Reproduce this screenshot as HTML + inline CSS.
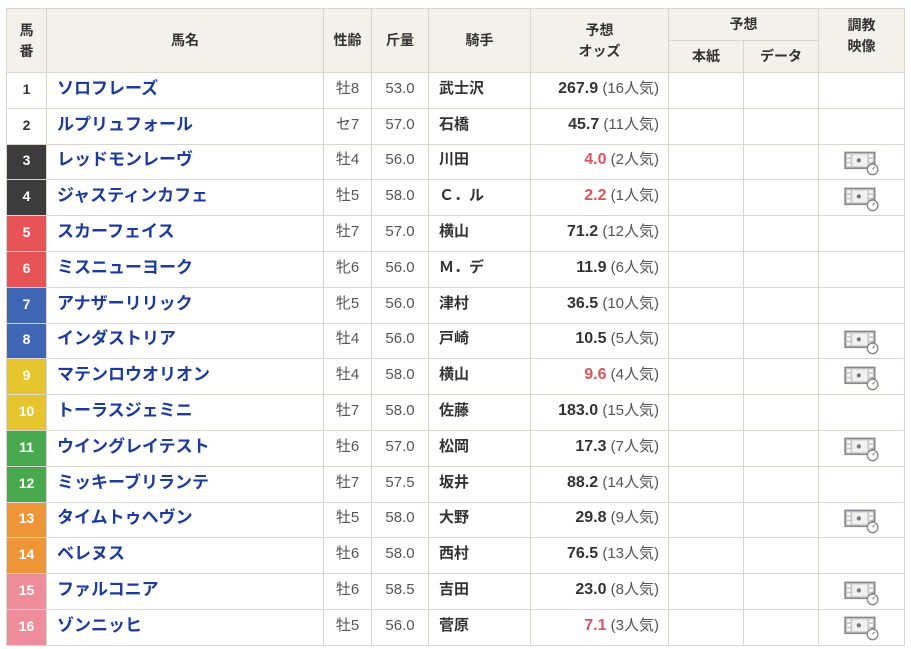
<!DOCTYPE html><html><head><meta charset="utf-8"><style>
body{margin:0;background:#fff;font-family:"Liberation Sans","Noto Sans CJK JP",sans-serif;}
table{position:absolute;left:6px;top:8px;border-collapse:collapse;table-layout:fixed;width:898px;}
td,th{border:1px solid #d9d6d0;padding:0;font-size:15px;color:#333;line-height:18px;vertical-align:middle;}
th{background:#f3f1ec;font-weight:bold;font-size:14px;line-height:21px;}
tbody tr{height:35.8px;}
tbody td{padding-bottom:3px;}
.n{text-align:center;font-weight:bold;font-size:14px;}
.nm{color:#1d3b9c;font-weight:bold;font-size:17px;padding-left:10px;}
.c{text-align:center;color:#555;}
.j{font-weight:bold;padding-left:10px;}
.o{text-align:right;padding-right:9px;color:#555;}
.o b{font-size:16px;color:#333;}
.o b.r{color:#d9555c;}
.ic{text-align:center;padding-bottom:0;}
</style></head><body>
<table>
<colgroup><col style="width:40px"><col style="width:277px"><col style="width:48px"><col style="width:57px"><col style="width:102px"><col style="width:138px"><col style="width:75px"><col style="width:75px"><col style="width:86px"></colgroup>
<thead>
<tr style="height:32px"><th rowspan="2">馬<br>番</th><th rowspan="2">馬名</th><th rowspan="2">性齢</th><th rowspan="2">斤量</th><th rowspan="2">騎手</th><th rowspan="2">予想<br>オッズ</th><th colspan="2">予想</th><th rowspan="2" style="vertical-align:top;padding-top:6px">調教<br>映像</th></tr>
<tr style="height:32px"><th>本紙</th><th>データ</th></tr>
</thead>
<tbody id="b"></tbody></table>
<script>
var d=[["1","ソロフレーズ","牡8","53.0","武士沢","267.9","16",0,0,"#fff","#333"],
["2","ルプリュフォール","セ7","57.0","石橋","45.7","11",0,0,"#fff","#333"],
["3","レッドモンレーヴ","牡4","56.0","川田","4.0","2",1,1,"#3c3c3c","#fff"],
["4","ジャスティンカフェ","牡5","58.0","Ｃ．ル","2.2","1",1,1,"#3c3c3c","#fff"],
["5","スカーフェイス","牡7","57.0","横山","71.2","12",0,0,"#e65457","#fff"],
["6","ミスニューヨーク","牝6","56.0","Ｍ．デ","11.9","6",0,0,"#e65457","#fff"],
["7","アナザーリリック","牝5","56.0","津村","36.5","10",0,0,"#3e66b4","#fff"],
["8","インダストリア","牡4","56.0","戸崎","10.5","5",0,1,"#3e66b4","#fff"],
["9","マテンロウオリオン","牡4","58.0","横山","9.6","4",1,1,"#e5c42d","#fff"],
["10","トーラスジェミニ","牡7","58.0","佐藤","183.0","15",0,0,"#e5c42d","#fff"],
["11","ウイングレイテスト","牡6","57.0","松岡","17.3","7",0,1,"#47a84e","#fff"],
["12","ミッキーブリランテ","牡7","57.5","坂井","88.2","14",0,0,"#47a84e","#fff"],
["13","タイムトゥヘヴン","牡5","58.0","大野","29.8","9",0,1,"#ee9637","#fff"],
["14","ベレヌス","牡6","58.0","西村","76.5","13",0,0,"#ee9637","#fff"],
["15","ファルコニア","牡6","58.5","吉田","23.0","8",0,1,"#ef8c9c","#fff"],
["16","ゾンニッヒ","牡5","56.0","菅原","7.1","3",1,1,"#ef8c9c","#fff"]];
var icon='<svg width="36" height="26" viewBox="0 0 34 24" style="display:block;margin:2px auto 0"><rect x="1" y="2" width="28" height="15" fill="#ccc" stroke="#888" stroke-width="1.5"/><rect x="3" y="4" width="3" height="2.5" fill="#fff"/><rect x="3" y="8.3" width="3" height="2.5" fill="#fff"/><rect x="3" y="12.5" width="3" height="2.5" fill="#fff"/><rect x="24" y="4" width="3" height="2.5" fill="#fff"/><rect x="24" y="8.3" width="3" height="2.5" fill="#fff"/><rect x="8" y="4" width="14" height="11" fill="#f2f2f2"/><circle cx="14" cy="9.5" r="2" fill="#777"/><circle cx="27" cy="18" r="5" fill="#fff" stroke="#888" stroke-width="1.3"/><path d="M27 18 L29 15.5" stroke="#888" stroke-width="1.1"/><path d="M26 12 h2" stroke="#888"/></svg>';
var h='';d.forEach(function(r){h+='<tr><td class="n" style="background:'+r[9]+';color:'+r[10]+'">'+r[0]+'</td><td class="nm">'+r[1]+'</td><td class="c">'+r[2]+'</td><td class="c">'+r[3]+'</td><td class="j">'+r[4]+'</td><td class="o"><b'+(r[7]?' class="r"':'')+'>'+r[5]+'</b> ('+r[6]+'人気)</td><td></td><td></td><td class="ic">'+(r[8]?icon:'')+'</td></tr>';});
document.getElementById('b').innerHTML=h;
</script></body></html>
